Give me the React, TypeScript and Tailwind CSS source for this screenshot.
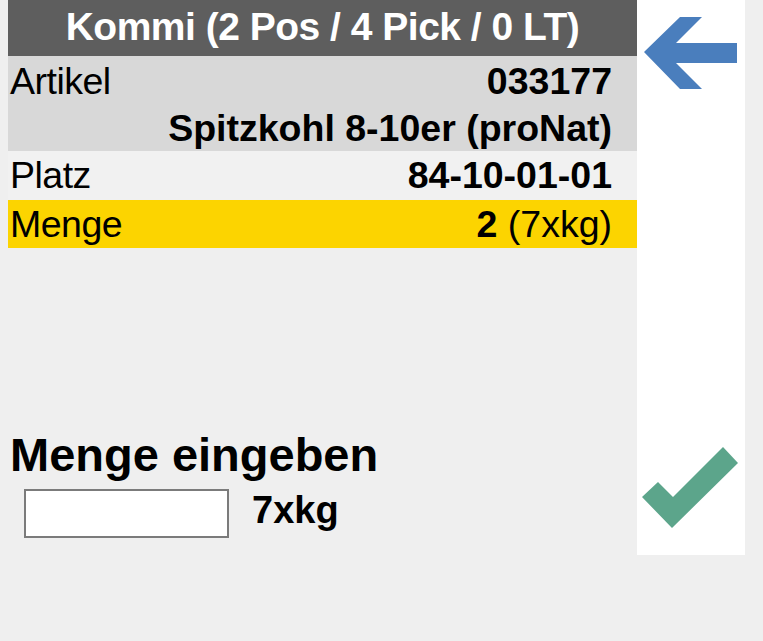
import React from 'react'

const font = { fontFamily: '"Liberation Sans", Arial, sans-serif' }

function Row({ label, value, bg }: { label?: string; value: React.ReactNode; bg: string }) {
  return (
    <div className={`flex items-center justify-between h-[48px] pl-[2px] pr-[25px] text-[37.5px] leading-[48px] text-black ${bg}`}>
      <span className="tracking-[-0.5px]">{label}</span>
      <span className="font-bold">{value}</span>
    </div>
  )
}

export default function App() {
  return (
    <div className="w-[763px] h-[641px] bg-[#efefef] flex overflow-hidden" style={font}>
      {/* main column */}
      <div className="w-[629px] ml-[8px] flex flex-col">
        <div className="h-[56px] bg-[#5e5e5e] text-white font-bold text-[39px] leading-[54px] text-center tracking-[-0.5px]">
          Kommi (2 Pos / 4 Pick / 0 LT)
        </div>
        <div className="h-[1px] bg-[#d8d8d8]" />
        <Row label="Artikel" value="033177" bg="bg-[#d8d8d8]" />
        <div className="flex justify-end h-[46px] pr-[25px] text-[37.5px] leading-[46px] bg-[#d8d8d8] font-bold">
          Spitzkohl 8-10er (proNat)
        </div>
        <Row label="Platz" value="84-10-01-01" bg="bg-[#f1f1f1]" />
        <div className="h-[1px] bg-[#f1f1f1]" />
        <Row
          label="Menge"
          value={<>2 <span className="font-normal">(7xkg)</span></>}
          bg="bg-[#fcd400]"
        />

        <div className="mt-[181px] h-[52px] text-[47px] leading-[52px] font-bold text-black pl-[2px]">
          Menge eingeben
        </div>
        <div className="mt-[8px] flex items-center">
          <input
            type="text"
            aria-label="Menge"
            className="ml-[16px] w-[205px] h-[49px] bg-white border-2 border-[#7b7b7b] outline-none"
          />
          <span className="ml-[23px] text-[38px] leading-[44px] font-bold text-black -mt-[8px]">7xkg</span>
        </div>
      </div>

      {/* side buttons */}
      <div className="w-[108px] h-[555px] bg-white flex flex-col justify-between pb-[15px]">
        <svg width="108" height="100" viewBox="0 0 108 100" aria-label="Zurück">
          <polygon
            points="7,52 43,17 65,17 39,43 100,43 100,63 39,63 65,89 43,89"
            fill="#4a7ebd"
          />
        </svg>
        <svg width="108" height="100" viewBox="0 440 108 100" aria-label="OK">
          <polygon points="5,497 21,482 36,497 86,447 101,463 35,528" fill="#5ca58b" />
        </svg>
      </div>
    </div>
  )
}
